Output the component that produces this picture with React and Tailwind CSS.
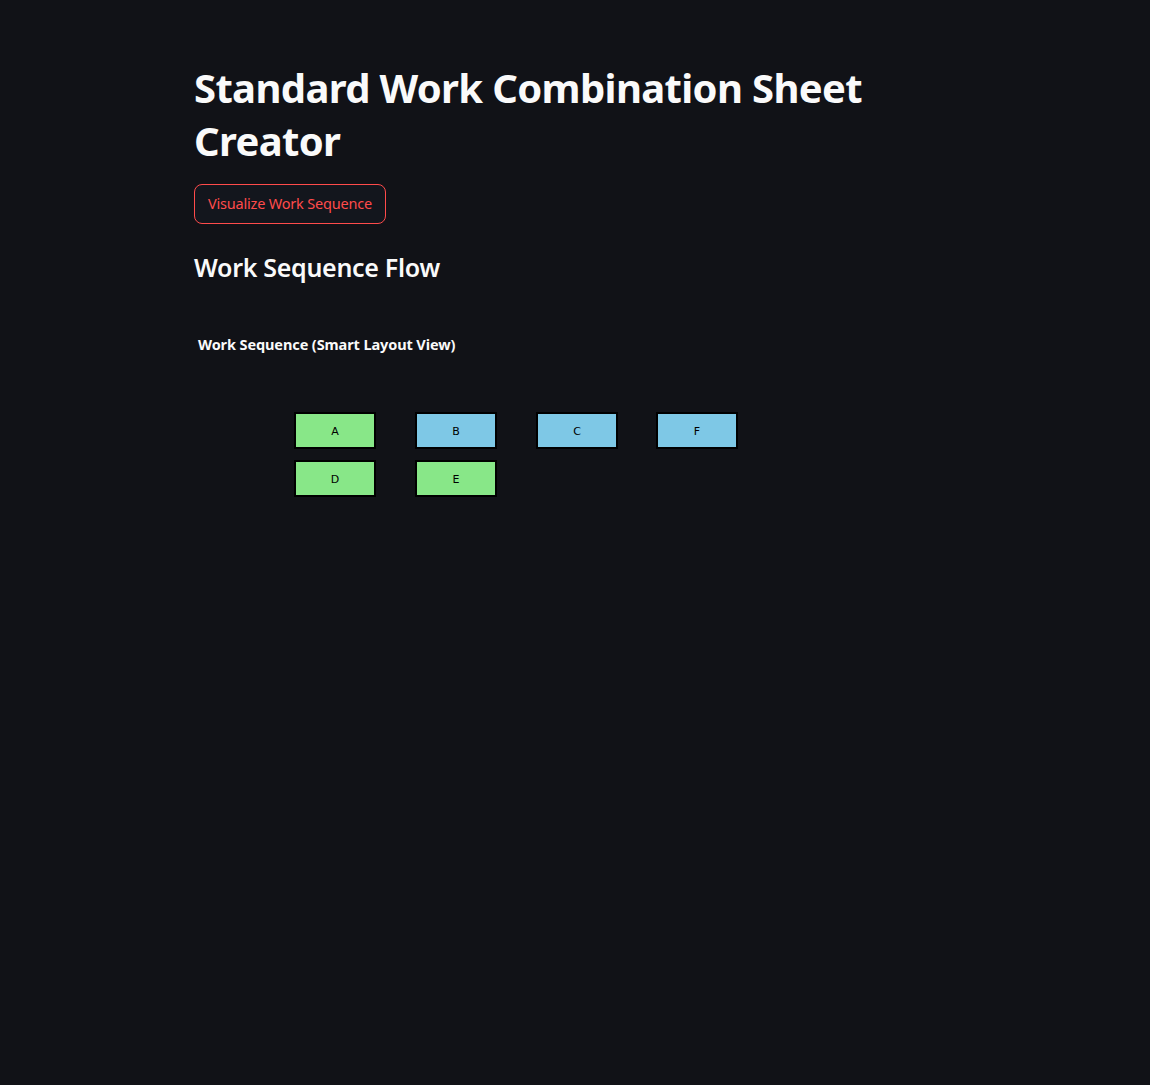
const nodes = [
  { id: 'A', x: 100, y: 78, color: 'bg-[#88e788]' },
  { id: 'B', x: 221, y: 78, color: 'bg-[#7ec8e6]' },
  { id: 'C', x: 342, y: 78, color: 'bg-[#7ec8e6]' },
  { id: 'F', x: 462, y: 78, color: 'bg-[#7ec8e6]' },
  { id: 'D', x: 100, y: 126, color: 'bg-[#88e788]' },
  { id: 'E', x: 221, y: 126, color: 'bg-[#88e788]' },
]

export default function App() {
  return (
    <div className="min-h-[1085px] bg-[#111217] text-[#fafafa] font-['Noto_Sans',sans-serif]">
      <div className="mx-auto w-[762px] pt-[61px]">
        <h1 className="text-[40px] leading-[53px] font-bold tracking-[-0.65px]">
          Standard Work Combination Sheet Creator
        </h1>
        <button className="mt-[17px] h-[40px] px-[13px] rounded-[8px] border border-[#ff4b4b] bg-[#13161d] text-[#ff4b4b] text-[14.5px] tracking-[-0.2px]">
          Visualize Work Sequence
        </button>
        <h2 className="mt-[24px] text-[25px] leading-[38px] font-semibold tracking-[-0.3px]">
          Work Sequence Flow
        </h2>
        <div className="relative mt-[48px] h-[250px]">
          <div className="absolute left-[4px] top-0 text-[14.5px] font-bold tracking-[-0.1px]">
            Work Sequence (Smart Layout View)
          </div>
          {nodes.map(n => (
            <div
              key={n.id}
              className={`absolute w-[82px] h-[37px] pt-[3px] border-2 border-black ${n.color} flex items-center justify-center text-[11px] text-black font-['DejaVu_Sans',sans-serif]`}
              style={{ left: n.x, top: n.y }}
            >
              {n.id}
            </div>
          ))}
        </div>
      </div>
    </div>
  )
}
